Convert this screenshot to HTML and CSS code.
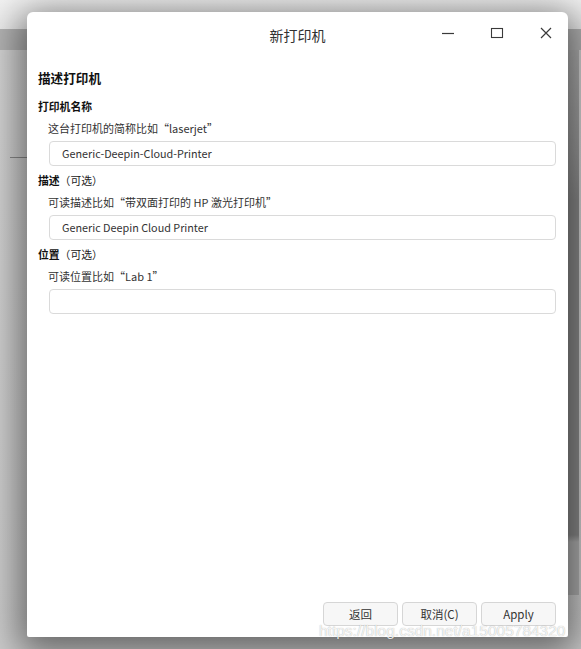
FILE: index.html
```html
<!DOCTYPE html>
<html lang="zh-CN">
<head>
<meta charset="utf-8">
<title>新打印机</title>
<link rel="stylesheet" href="styles.css">
</head>
<body>
<div class="desktop">
  <div class="bg-bar"></div>
  <div class="bg-line"></div>
  <div class="bg-stripe"></div>

  <div class="dialog">
    <div class="titlebar">
      <div class="title">新打印机</div>
      <div class="controls">
        <span class="wbtn">
          <svg width="14" height="14" viewBox="0 0 14 14"><path d="M1 7.5H13" stroke="#3a3a3a" stroke-width="1.2" fill="none"/></svg>
        </span>
        <span class="wbtn">
          <svg width="14" height="14" viewBox="0 0 14 14"><rect x="1.5" y="2.5" width="11" height="9" stroke="#3a3a3a" stroke-width="1.1" fill="none"/></svg>
        </span>
        <span class="wbtn">
          <svg width="14" height="14" viewBox="0 0 14 14"><path d="M2 2L12 12M12 2L2 12" stroke="#3a3a3a" stroke-width="1.2" fill="none"/></svg>
        </span>
      </div>
    </div>

    <div class="content">
      <div class="heading">描述打印机</div>

      <div class="group">
        <div class="label"><b>打印机名称</b></div>
        <div class="hint">这台打印机的简称比如“laserjet”</div>
        <div class="input">Generic-Deepin-Cloud-Printer</div>
      </div>

      <div class="group">
        <div class="label"><b>描述</b>（可选）</div>
        <div class="hint">可读描述比如“带双面打印的 HP 激光打印机”</div>
        <div class="input">Generic Deepin Cloud Printer</div>
      </div>

      <div class="group">
        <div class="label"><b>位置</b>（可选）</div>
        <div class="hint">可读位置比如“Lab 1”</div>
        <div class="input"></div>
      </div>
    </div>

    <div class="footer">
      <span class="btn">返回</span>
      <span class="btn">取消(C)</span>
      <span class="btn">Apply</span>
    </div>
  </div>

  <div class="watermark">https://blog.csdn.net/a15005784320</div>
</div>
</body>
</html>
```

FILE: styles.css
```css
* { box-sizing: border-box; }

html, body {
  margin: 0;
  padding: 0;
}

body {
  width: 581px;
  height: 649px;
  overflow: hidden;
  font-family: "Noto Sans CJK SC", "Noto Sans", sans-serif;
}

.desktop {
  position: relative;
  width: 581px;
  height: 649px;
  background: linear-gradient(to bottom, #f3f3f3 0px, #ececec 29px, #d4d4d4 50px, #cccccc 649px);
  overflow: hidden;
}

.bg-bar {
  position: absolute;
  left: 0;
  top: 29px;
  width: 581px;
  height: 21px;
  background: #b4b4b4;
}

.bg-line {
  position: absolute;
  left: 10px;
  top: 157px;
  width: 20px;
  height: 1px;
  background: #8a8a8a;
}

.bg-stripe {
  position: absolute;
  left: 568px;
  top: 50px;
  width: 11px;
  height: 545px;
  background: linear-gradient(to bottom, #b0b0b0 0px, #9a9a9a 100px, #8a8a8a 150px, #8a8a8a 485px, #b0b0b0 492px);
}

.dialog {
  position: absolute;
  left: 27px;
  top: 12px;
  width: 541px;
  height: 625px;
  background: #ffffff;
  border-radius: 6px 6px 2px 2px;
  box-shadow: 0 8px 36px 8px rgba(0, 0, 0, 0.5);
  display: flex;
  flex-direction: column;
}

.titlebar {
  height: 46px;
  display: grid;
  flex: none;
}

.title {
  grid-area: 1 / 1;
  align-self: center;
  justify-self: center;
  font-size: 14px;
  color: #303030;
  line-height: 20px;
}

.controls {
  grid-area: 1 / 1;
  justify-self: end;
  align-self: start;
  display: flex;
  height: 42px;
  margin-right: -2px;
}

.wbtn {
  width: 49px;
  height: 42px;
  display: flex;
  align-items: center;
  justify-content: center;
}

.wbtn svg { display: block; }

.content {
  flex: 1;
  padding: 8px 12px 0 11px;
}

.heading {
  font-size: 12.6px;
  font-weight: 700;
  line-height: 24px;
  color: #111;
  margin-bottom: 5px;
}

.group {
  margin-bottom: 3px;
}

.label {
  font-size: 10.8px;
  line-height: 22px;
  color: #1a1a1a;
}

.label b { font-weight: 700; color: #111; }

.hint {
  font-size: 11px;
  line-height: 22px;
  color: #333;
  padding-left: 10px;
}

.input {
  margin: 2px 0 0 11px;
  height: 25px;
  border: 1px solid #dadada;
  border-radius: 4px;
  padding-left: 12px;
  font-size: 10.8px;
  line-height: 23px;
  color: #333;
}

.footer {
  flex: none;
  display: flex;
  justify-content: flex-end;
  gap: 4px;
  padding: 0 12px 11px 0;
}

.btn {
  width: 75px;
  height: 24px;
  border: 1px solid #d6d6d6;
  border-radius: 4px;
  background: #f7f7f7;
  font-size: 11.5px;
  line-height: 22px;
  color: #333;
  text-align: center;
}

.watermark {
  position: absolute;
  left: 319px;
  top: 621px;
  font-family: "Liberation Sans", Arial, sans-serif;
  font-size: 15.5px;
  line-height: 20px;
  color: rgba(255, 255, 255, 0.85);
  text-shadow: 0 0 1px rgba(0, 0, 0, 0.35);
  white-space: nowrap;
}
```
